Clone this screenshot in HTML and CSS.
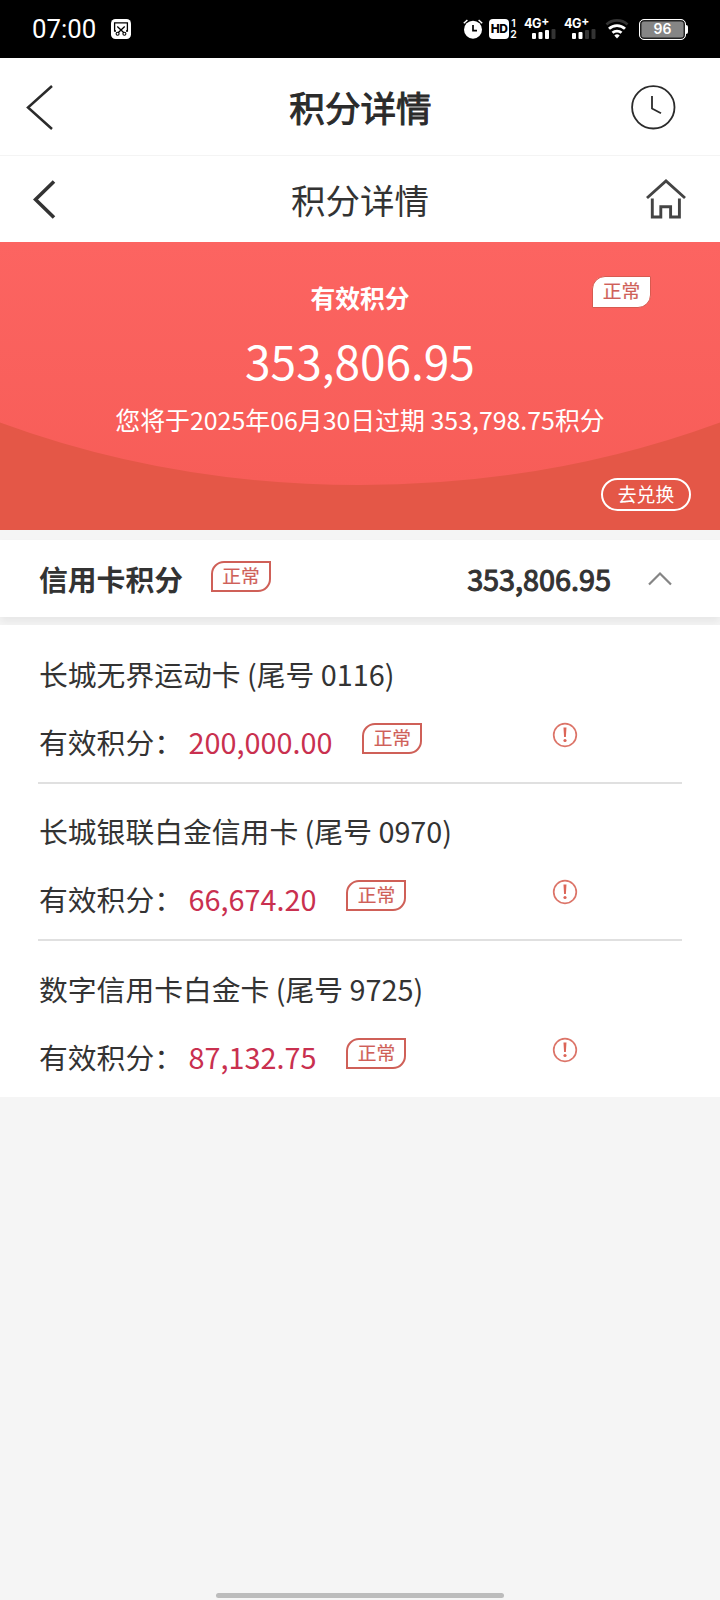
FILE: index.html
```html
<!DOCTYPE html>
<html lang="zh-CN">
<head>
<meta charset="utf-8">
<title>积分详情</title>
<link rel="stylesheet" href="styles.css">
</head>
<body>
<div class="screen">
  <header class="status">
    <span class="time">07:00</span>
    <svg class="shot" width="20" height="20" viewBox="0 0 20 20"><rect width="20" height="20" rx="4.5" fill="#fff"/><path d="M5 12H3.6V3.8h12.8V12H15M6.3 7.5l6.6 6.2M13.7 7.5l-6.6 6.2" fill="none" stroke="#000" stroke-width="1.3"/><circle cx="6.6" cy="14.7" r="1.5" fill="none" stroke="#000" stroke-width="1.1"/><circle cx="13.4" cy="14.7" r="1.5" fill="none" stroke="#000" stroke-width="1.1"/></svg>
    <div class="tray">
      <svg class="alarm" width="20" height="20" viewBox="0 0 20 20"><circle cx="10" cy="10.7" r="9" fill="#fff"/><path d="M10 6v5.6h4" fill="none" stroke="#000" stroke-width="1.7"/><path d="M.8 4.2L4.4 1M19.2 4.2L15.600 1" stroke="#fff" stroke-width="1.5"/></svg>
      <span class="hd">HD</span>
      <span class="sims"><i>1</i><i>2</i></span>
      <span class="cell"><b>4G<sup>+</sup></b><svg width="24" height="10" viewBox="0 0 24 10"><g fill="#fff"><rect x="0" y="4" width="4" height="6" rx="1"/><rect x="6.500" y="3" width="4" height="7" rx="1"/><rect x="13" y="1" width="4" height="9" rx="1"/></g><rect x="19.500" y="0" width="4" height="10" rx="1" fill="#333"/></svg></span>
      <span class="cell"><b>4G<sup>+</sup></b><svg width="24" height="10" viewBox="0 0 24 10"><g fill="#fff"><rect x="0" y="4" width="4" height="6" rx="1"/><rect x="6.500" y="3" width="4" height="7" rx="1"/></g><g fill="#333"><rect x="13" y="1" width="4" height="9" rx="1"/><rect x="19.500" y="0" width="4" height="10" rx="1"/></g></svg></span>
      <svg class="wifi" width="24" height="20" viewBox="0 0 24 20"><g fill="none" stroke-width="2.800"><path d="M1.500 5.500a15.500 15.500 0 0 1 21 0" stroke="#333"/><path d="M4 9.800a11.500 11.500 0 0 1 16 0M7.500 13.800a6.600 6.600 0 0 1 9 0" stroke="#fff"/></g><path d="M9.300 16.500a4 4 0 0 1 5.400 0L12 19.500z" fill="#fff"/></svg>
      <span class="battery"><span class="level">96</span><span class="cap"></span></span>
    </div>
  </header>

  <nav class="nav nav-app">
    <svg width="30" height="48" viewBox="0 0 30 48"><path d="M26 3L2 24.500 26 46" fill="none" stroke="#2b2b2b" stroke-width="2.500"/></svg>
    <h1>积分详情</h1>
    <svg width="46" height="46" viewBox="0 0 46 46"><g fill="none" stroke="#2b2b2b" stroke-width="1.800"><circle cx="23.300" cy="23.300" r="21.200"/><path d="M22 12v12.500l9 4.800"/></g></svg>
  </nav>
  <nav class="nav nav-page">
    <svg width="24" height="40" viewBox="0 0 24 40"><path d="M21 2.500L2.500 20.500 21 38.500" fill="none" stroke="#333" stroke-width="3.600"/></svg>
    <h2>积分详情</h2>
    <svg width="42" height="42" viewBox="0 0 42 42"><g fill="none" stroke="#444" stroke-width="2.900"><path d="M2 20L21 3l19 17"/><path d="M7.300 20.500V39h8.500V28.800h9.800V39h8.800V20.500"/></g></svg>
  </nav>

  <section class="hero">
    <svg class="arc" width="720" height="288" viewBox="0 0 720 288"><defs><linearGradient id="glow" x1="0" y1="0" x2="0" y2="1"><stop offset="0" stop-color="#fc6461"/><stop offset="1" stop-color="#f75d58"/></linearGradient></defs><path d="M0 0H720V180.500Q550 243 360 243T0 180.500z" fill="url(#glow)"/></svg>
    <div class="hero-title">有效积分</div>
    <div class="total">353,806.95</div>
    <div class="expire">您将于2025年06月30日过期 353,798.75积分</div>
    <span class="badge badge-solid">正常</span>
    <a class="redeem">去兑换</a>
  </section>

  <section class="summary">
    <strong>信用卡积分</strong>
    <span class="badge">正常</span>
    <strong class="sum">353,806.95</strong>
    <svg width="26" height="16" viewBox="0 0 26 16"><path d="M2 13.500L13 2.500l11 11" fill="none" stroke="#858585" stroke-width="2.200"/></svg>
  </section>

  <ul class="cards">
    <li>
      <div class="name">长城无界运动卡 (尾号 0116)</div>
      <div class="points"><span>有效积分：</span><em>200,000.00</em><span class="badge">正常</span></div>
      <svg class="info" width="26" height="26" viewBox="0 0 26 26"><circle cx="13" cy="13" r="11.300" fill="none" stroke="#dc7468" stroke-width="1.700"/><path d="M11.500 5.500h3l-.6 9.500h-1.800z" fill="#dc6558"/><circle cx="13" cy="18.500" r="1.600" fill="#dc6558"/></svg>
    </li>
    <li>
      <div class="name">长城银联白金信用卡 (尾号 0970)</div>
      <div class="points"><span>有效积分：</span><em>66,674.20</em><span class="badge">正常</span></div>
      <svg class="info" width="26" height="26" viewBox="0 0 26 26"><circle cx="13" cy="13" r="11.300" fill="none" stroke="#dc7468" stroke-width="1.700"/><path d="M11.500 5.500h3l-.6 9.500h-1.800z" fill="#dc6558"/><circle cx="13" cy="18.500" r="1.600" fill="#dc6558"/></svg>
    </li>
    <li>
      <div class="name">数字信用卡白金卡 (尾号 9725)</div>
      <div class="points"><span>有效积分：</span><em>87,132.75</em><span class="badge">正常</span></div>
      <svg class="info" width="26" height="26" viewBox="0 0 26 26"><circle cx="13" cy="13" r="11.300" fill="none" stroke="#dc7468" stroke-width="1.700"/><path d="M11.500 5.500h3l-.6 9.500h-1.800z" fill="#dc6558"/><circle cx="13" cy="18.500" r="1.600" fill="#dc6558"/></svg>
    </li>
  </ul>
  <div class="home-bar"></div>
</div>
</body>
</html>
```
FILE: styles.css
```css
* { box-sizing: border-box; }
body { margin: 0; background: #f5f5f5; color: #333; font-family: "Noto Sans CJK SC", sans-serif; }
h1, h2, ul { margin: 0; padding: 0; list-style: none; }
svg { display: block; flex: none; }
em, i { font-style: normal; }
.screen { width: 720px; height: 1600px; display: flex; flex-direction: column; background: #f5f5f5; overflow: hidden; }

.status { height: 58px; flex: none; background: #000; color: #fff; display: flex; align-items: center; padding: 0 32px; }
.time { font: 25.8px/58px Roboto, sans-serif; width: 65px; white-space: nowrap; }
.shot { margin-left: 14px; }
.tray { margin-left: auto; display: flex; align-items: center; font-family: Inter, Roboto, sans-serif; }
.hd { width: 20px; height: 20px; margin-left: 6px; border-radius: 4px; background: #fff; color: #000; font: 800 12px/20px Inter, sans-serif; text-align: center; letter-spacing: -.5px; }
.sims { display: flex; flex-direction: column; width: 7px; margin-left: 1px; font: 600 10.5px/11px Inter, sans-serif; text-align: center; }
.cell { position: relative; width: 32px; height: 20px; margin-left: 7px; display: flex; align-items: flex-end; justify-content: flex-end; }
.cell + .cell { margin-left: 8px; }
.cell b { position: absolute; left: 0; top: -2px; font: 700 12.6px/14px Inter, sans-serif; letter-spacing: -.4px; white-space: nowrap; }
.cell sup { font-size: 12px; line-height: 0; vertical-align: 3px; }
.wifi { margin-left: 9px; }
.battery { display: flex; align-items: center; margin-left: 10px; }
.level { width: 47px; height: 21px; border: 1.5px solid #fff; border-radius: 5px; background: #858585; box-shadow: inset 0 0 0 1.5px #222; font: 600 14px/17px Inter, sans-serif; text-align: center; }
.cap { width: 2px; height: 9px; background: #fff; border-radius: 0 2px 2px 0; }

.nav { flex: none; background: #fff; display: flex; align-items: center; justify-content: space-between; }
.nav-app { height: 98px; padding: 0 44px 0 26px; border-bottom: 1px solid #f4f4f4; }
.nav-page { height: 86px; padding: 0 33px 0 33px; }
.nav h1 { font-size: 35.6px; font-weight: 400; line-height: 50px; margin-left: 35px; color: #2b2b2b; -webkit-text-stroke: 1px #2b2b2b; }
.nav h2 { font-size: 34.5px; font-weight: 400; line-height: 50px; margin-left: 18px; }

.hero { position: relative; flex: none; height: 288px; padding-top: 37px; background: #e45747; color: #fff; text-align: center; }
.arc { position: absolute; left: 0; top: 0; }
.hero-title, .total, .expire { position: relative; }
.hero-title { font-size: 24.8px; font-weight: 700; line-height: 36px; }
.total { font-size: 46px; line-height: 56px; margin-top: 17px; }
.expire { font-size: 24.9px; line-height: 36px; margin-top: 13px; }
.badge { width: 60px; height: 31px; flex: none; border: 2px solid #cf6058; border-radius: 13px 0 13px 0; color: #cf6058; font-size: 18.7px; line-height: 24px; text-align: center; -webkit-text-stroke: .2px #cf6058; }
.badge-solid { position: absolute; right: 69px; top: 34px; width: 59px; height: 32px; border-width: 1.5px; border-color: #d75a50; background: #fff; line-height: 26px; }
.redeem { position: absolute; right: 29px; top: 236px; width: 90px; height: 33px; border: 2px solid #fff; border-radius: 17px; font-size: 18.8px; line-height: 28px; }

.summary { flex: none; height: 77px; margin-top: 10px; padding: 0 47px 0 39px; background: #fff; display: flex; align-items: center; box-shadow: 0 5px 8px rgba(0, 0, 0, .06); }
.summary strong { font-size: 28.8px; font-weight: 700; line-height: 42px; }
.summary .badge { margin: -5px 0 0 28px; }
.summary .sum { margin-left: auto; font-weight: 400; -webkit-text-stroke: 1.1px #333; }
.summary svg { margin-left: 36px; }

.cards { flex: none; height: 472px; margin-top: 8px; padding: 0 38px; background: #fff; position: relative; }
.cards li { position: relative; height: 157px; padding: 28px 1px 0; font-size: 28.8px; }
.cards li + li { border-top: 2px solid #e0e0e0; padding-top: 26px; }
.cards li:last-child { padding-top: 27px; }
.name { line-height: 42px; white-space: nowrap; }
.points { display: flex; line-height: 42px; margin-top: 26px; }
.points em { color: #c9304f; margin-left: 5.500px; }
.points .badge { margin: 2px 0 0 30px; }
.info { position: absolute; left: 514px; top: 97px; }
.cards li + li .info { top: 95px; }
.cards li:last-child .info { top: 96px; }

.home-bar { width: 288px; height: 5px; margin: auto auto 2px; border-radius: 3px; background: #bcbcbc; }
```
